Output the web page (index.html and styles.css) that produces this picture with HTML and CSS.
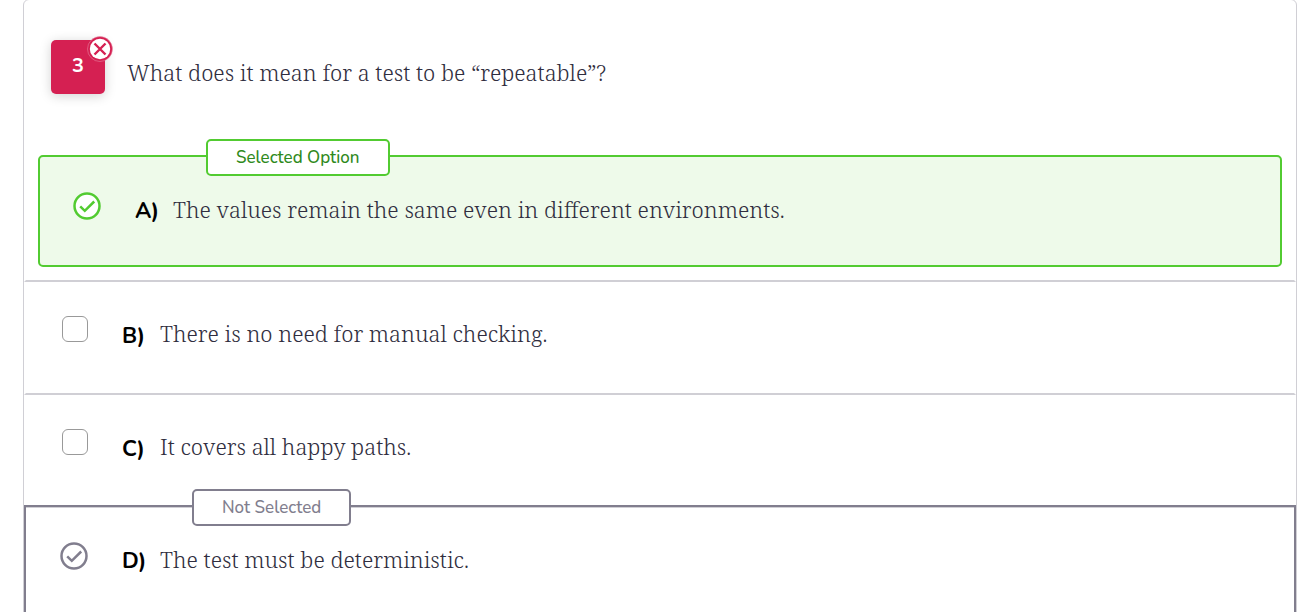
FILE: index.html
```html
<!DOCTYPE html>
<html lang="en">
<head>
<meta charset="utf-8">
<meta name="viewport" content="width=device-width, initial-scale=1">
<title>Question 3</title>
<link rel="stylesheet" href="styles.css">
</head>
<body>
<main class="card">
  <header class="question">
    <div class="number">3
      <svg class="wrong" viewBox="0 0 26 26" role="img" aria-label="Incorrect"><circle cx="13" cy="13" r="12.5" fill="#d52052" stroke="#e994ad" stroke-width=".5"/><circle cx="13" cy="13" r="10.2" fill="#fff"/><path d="M7.500 7.500l11 11M18.500 7.500l-11 11" stroke="#d52052" stroke-width="2.400"/></svg>
    </div>
    <h1 class="prose">What does it mean for a test to be “repeatable”?</h1>
  </header>
  <ul class="options">
    <li class="slot">
      <div class="option selected">
        <span class="tag">Selected Option</span>
        <svg class="mark" viewBox="0 0 28 28" role="img" aria-label="Correct"><circle cx="14" cy="14" r="12.500" fill="#fff" stroke="currentColor" stroke-width="2.500"/><path d="M7.200 14.300l4.600 4.500 9.400-9.300" fill="none" stroke="currentColor" stroke-width="2.500"/></svg>
        <span class="letter">A)</span>
        <span class="prose">The values remain the same even in different environments.</span>
      </div>
    </li>
    <li class="option choice">
      <input class="box" type="checkbox" id="b">
      <label class="answer" for="b"><span class="letter">B)</span><span class="prose">There is no need for manual checking.</span></label>
    </li>
    <li class="option choice">
      <input class="box" type="checkbox" id="c">
      <label class="answer" for="c"><span class="letter">C)</span><span class="prose">It covers all happy paths.</span></label>
    </li>
    <li class="option missed">
      <span class="tag">Not Selected</span>
      <svg class="mark" viewBox="0 0 28 28" role="img" aria-label="Correct, not selected"><circle cx="14" cy="14" r="12.500" fill="#fff" stroke="currentColor" stroke-width="2.500"/><path d="M7.200 14.300l4.600 4.500 9.400-9.300" fill="none" stroke="currentColor" stroke-width="2.500"/></svg>
      <span class="letter">D)</span>
      <span class="prose">The test must be deterministic.</span>
    </li>
  </ul>
</main>
</body>
</html>
```
FILE: styles.css
```css
* { box-sizing: border-box; }

body {
  margin: 0;
  background: #fff;
  font-family: Nunito, Lato, sans-serif;
  overflow: hidden;
}

.card {
  margin: -1px 2px 0 23px;
  border: 1px solid #d0cfd5;
  border-radius: 6px;
}

.question {
  display: flex;
  align-items: flex-start;
  gap: 22px;
  padding: 40px 27px 47px;
}

.number {
  position: relative;
  flex: none;
  width: 54px;
  height: 54px;
  border-radius: 5px;
  background: #d52052;
  box-shadow: 0 2px 12px rgba(0, 0, 0, .18);
  color: #fff;
  font-size: 20px;
  font-weight: 700;
  line-height: 52px;
  text-align: center;
}

.wrong {
  position: absolute;
  top: -4px;
  right: -8px;
  width: 26px;
  height: 26px;
}

.prose {
  margin: 0;
  color: #302e40;
  font-family: "Noto Serif", "DejaVu Serif Condensed", "Liberation Serif", serif;
  font-size: 22px;
  font-weight: 300;
  line-height: 32px;
}

.question .prose { padding-top: 16px; }

.options {
  margin: 0;
  padding: 0;
  list-style: none;
}

.slot {
  padding: 14px 12px 13px;
  border: 0 solid transparent;
  border-width: 0 2px 2px;
  border-bottom-color: #d0cfd5;
}

.option {
  position: relative;
  display: flex;
  align-items: flex-start;
  min-height: 112px;
  padding: 35px 34px 30px;
  border: 2px solid transparent;
  border-bottom-color: #d0cfd5;
}

.choice {
  min-height: 113px;
  padding-top: 32px;
}

.selected {
  padding-left: 33px;
  border-color: #52cb31;
  border-radius: 5px;
  background: #eefaea;
  color: #52cb31;
}

.missed {
  margin-top: -3px;
  border-color: #817e8e;
  color: #817e8e;
}

.mark {
  flex: none;
  width: 28px;
  height: 28px;
  margin-right: 34px;
}

.box {
  flex: none;
  appearance: none;
  width: 26px;
  height: 26px;
  margin: 0 34px 0 2px;
  border: 1px solid #999;
  border-radius: 6px;
  background: #fff;
}

.answer { display: flex; }

.letter {
  flex: none;
  width: 38px;
  padding-top: 5px;
  color: #000;
  font-size: 22px;
  font-weight: 700;
  line-height: 28px;
}

.choice .letter { padding-top: 6px; }

.option .prose { padding-top: 1px; }

.tag {
  position: absolute;
  top: -18px;
  left: 166px;
  padding: 0 28px;
  border: 2px solid currentColor;
  border-radius: 5px;
  background: #fff;
  font-size: 17px;
  font-weight: 500;
  line-height: 33px;
}

.selected .tag {
  border-color: #52cb31;
  color: #2f8a1c;
}
```
